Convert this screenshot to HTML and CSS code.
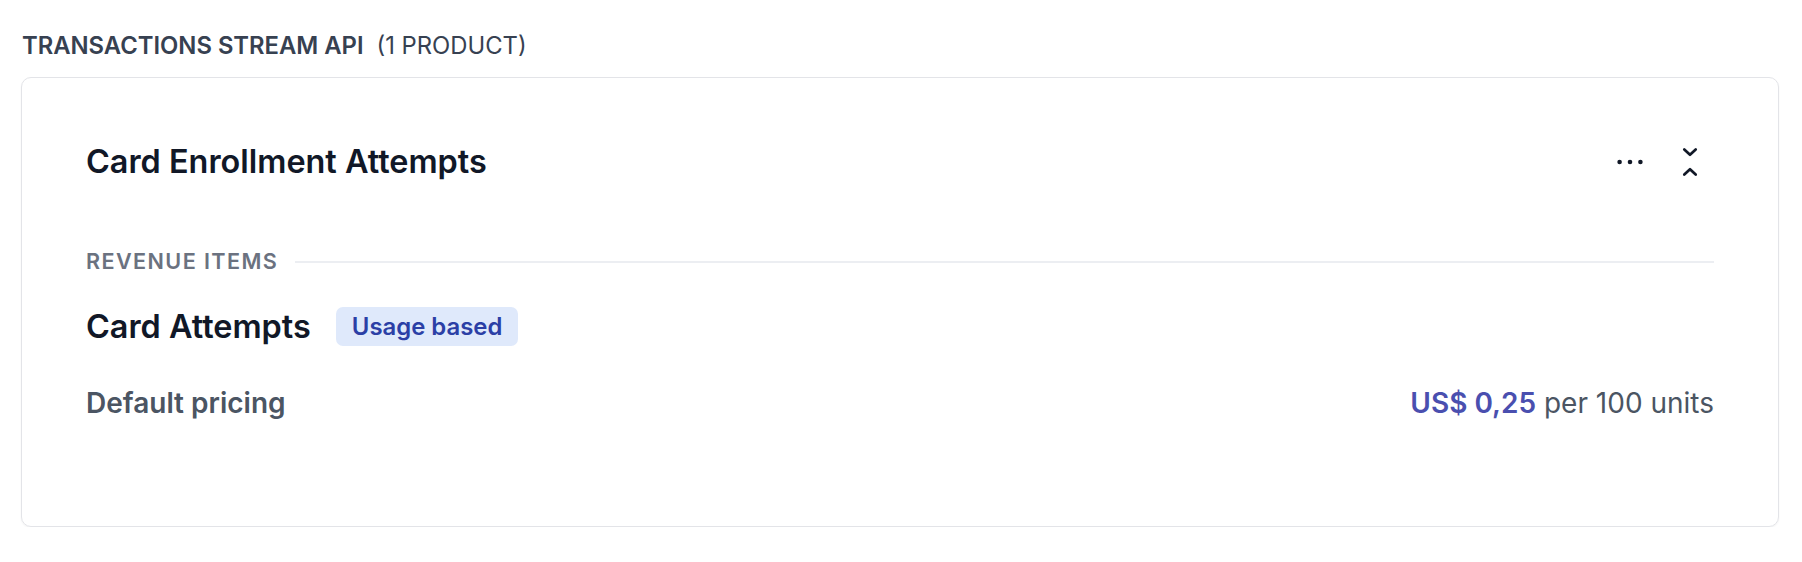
FILE: index.html
```html
<!DOCTYPE html>
<html lang="en">
<head>
<meta charset="utf-8">
<title>Transactions Stream API</title>
<link rel="stylesheet" href="styles.css">
</head>
<body>
<div class="page">
  <div class="group-label">
    <span class="group-name">TRANSACTIONS STREAM API</span>
    <span class="group-count">(1 PRODUCT)</span>
  </div>
  <div class="card">
    <div class="card-header">
      <h2 class="card-title">Card Enrollment Attempts</h2>
      <div class="actions">
        <button class="icon-btn" aria-label="More">
          <svg width="26" height="6" viewBox="0 0 26 6"><circle cx="2.6" cy="3" r="2.3"/><circle cx="13" cy="3" r="2.3"/><circle cx="23.4" cy="3" r="2.3"/></svg>
        </button>
        <button class="icon-btn" aria-label="Collapse">
          <svg width="16" height="30" viewBox="0 0 16 30" fill="none" stroke="#111827" stroke-width="2.7" stroke-linecap="round" stroke-linejoin="round"><path d="M2.3 2.5 L8 7.8 L13.7 2.5"/><path d="M2.3 27.5 L8 22.2 L13.7 27.5"/></svg>
        </button>
      </div>
    </div>
    <div class="section-head">
      <span class="section-title">REVENUE ITEMS</span>
      <span class="section-rule"></span>
    </div>
    <div class="item-row">
      <span class="item-name">Card Attempts</span>
      <span class="badge">Usage based</span>
    </div>
    <div class="pricing-row">
      <span class="pricing-label">Default pricing</span>
      <span class="pricing-value"><span class="price">US$ 0,25</span> per 100 units</span>
    </div>
  </div>
</div>
</body>
</html>
```
FILE: styles.css
```css
* { box-sizing: border-box; }
html, body { margin: 0; padding: 0; background: #ffffff; }
body { font-family: Inter, "Noto Sans", sans-serif; color: #111827; }

.page { padding: 32px 23px 0 21px; }

.group-label {
  display: flex;
  align-items: baseline;
  gap: 13px;
  padding-left: 1px;
  font-size: 23.8px;
  line-height: 28px;
  color: #374151;
}
.group-name { font-weight: 600; }
.group-count { font-weight: 400; }

.card {
  margin-top: 17px;
  border: 1px solid #e3e4e8;
  border-radius: 10px;
  box-shadow: 0 1px 2px rgba(0, 0, 0, 0.05);
  padding: 60px 64px 109px 64px;
  height: 450px;
}

.card-header {
  display: flex;
  align-items: center;
  justify-content: space-between;
  height: 48px;
}
.card-title {
  margin: 0;
  font-size: 32.4px;
  line-height: 40px;
  font-weight: 600;
  color: #111827;
}
.actions { display: flex; align-items: center; gap: 20px; margin-right: 4px; }
.icon-btn {
  width: 40px;
  height: 40px;
  display: flex;
  align-items: center;
  justify-content: center;
  border: 0;
  padding: 0;
  background: transparent;
  fill: #111827;
}

.section-head {
  margin-top: 63px;
  display: flex;
  align-items: center;
  gap: 17px;
  height: 24px;
}
.section-title {
  font-size: 21.6px;
  letter-spacing: 1.4px;
  font-weight: 600;
  color: #6b7280;
  white-space: nowrap;
}
.section-rule { flex: 1; height: 2px; background: #eceef2; margin-top: 2px; }

.item-row {
  margin-top: 33px;
  display: flex;
  align-items: center;
  gap: 25px;
  height: 40px;
}
.item-name { font-size: 32.4px; font-weight: 600; color: #111827; }
.badge {
  display: inline-flex;
  align-items: center;
  height: 39px;
  padding: 0 16px;
  border-radius: 7px;
  background: #dfe9fb;
  color: #2b3fa6;
  font-size: 23.9px;
  font-weight: 600;
}

.pricing-row {
  margin-top: 43px;
  display: flex;
  align-items: center;
  justify-content: space-between;
  height: 28px;
  font-size: 28px;
}
.pricing-label { font-weight: 600; color: #4b5563; }
.pricing-value { color: #4b5563; font-weight: 400; }
.price { color: #4a4faf; font-weight: 600; }
```
